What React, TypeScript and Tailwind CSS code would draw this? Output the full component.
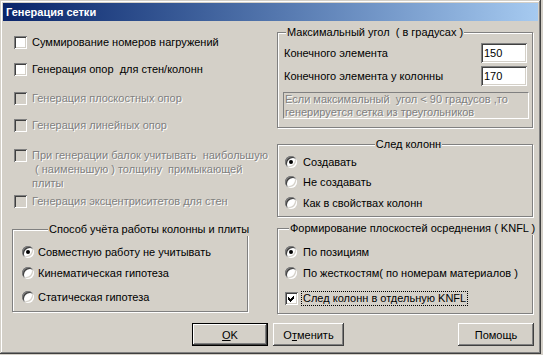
import React from 'react'

const sunken =
  'shadow-[inset_1px_1px_#808080,inset_-1px_-1px_#fff,inset_2px_2px_#404040,inset_-2px_-2px_#d4d0c8]'
const raised =
  'shadow-[inset_-1px_-1px_#404040,inset_1px_1px_#fff,inset_-2px_-2px_#808080,inset_2px_2px_#d4d0c8]'
const grayText = 'text-[#808080] [text-shadow:1px_1px_0_#fff]'

const CheckBox = ({ checked, disabled }: { checked?: boolean; disabled?: boolean }) => (
  <span
    className={`mt-[1px] flex h-[13px] w-[13px] shrink-0 items-center justify-center ${sunken} ${
      disabled ? 'bg-[#d4d0c8]' : 'bg-white'
    }`}
  >
    {checked && (
      <svg width="7" height="7" viewBox="0 0 7 7" shapeRendering="crispEdges">
        <path d="M0 2L2 4L6 0V3L2 7L0 5Z" fill="#000" />
      </svg>
    )}
  </span>
)

const Radio = ({ checked }: { checked?: boolean }) => (
  <span
    className={`mt-[1px] flex h-[12px] w-[12px] shrink-0 items-center justify-center rounded-full bg-white ${sunken}`}
  >
    {checked && <span className="h-[4px] w-[4px] rounded-full bg-black" />}
  </span>
)

const CheckRow = ({
  label,
  disabled,
  className = '',
}: {
  label: React.ReactNode
  disabled?: boolean
  className?: string
}) => (
  <div className={`flex items-start gap-[5px] pl-[2px] ${className}`}>
    <CheckBox disabled={disabled} />
    <span className={`whitespace-pre ${disabled ? grayText : ''}`}>{label}</span>
  </div>
)

const RadioRow = ({
  label,
  checked,
  className = '',
  gap = 'gap-[6px]',
}: {
  label: string
  checked?: boolean
  className?: string
  gap?: string
}) => (
  <div className={`flex items-start ${gap} ${className}`}>
    <Radio checked={checked} />
    <span className="whitespace-pre">{label}</span>
  </div>
)

const Group = ({
  title,
  center,
  titlePad = 'pl-[5px]',
  className = '',
  children,
}: {
  title: string
  center?: boolean
  titlePad?: string
  className?: string
  children: React.ReactNode
}) => (
  <div
    className={`flex flex-col border border-[#808080] shadow-[inset_1px_1px_#fff,1px_1px_#fff] ${className}`}
  >
    <div className={`-mt-[8px] flex ${center ? 'justify-center' : titlePad}`}>
      <span className="whitespace-pre bg-[#d4d0c8] px-[1px]">{title}</span>
    </div>
    {children}
  </div>
)

const Button = ({
  children,
  className = '',
  isDefault,
}: {
  children: React.ReactNode
  className?: string
  isDefault?: boolean
}) => (
  <div className={`h-[23px] ${isDefault ? 'border border-black' : ''} ${className}`}>
    <div className={`flex h-full w-full items-center justify-center bg-[#d4d0c8] ${raised}`}>
      {children}
    </div>
  </div>
)

export default function App() {
  return (
    <div className="h-[355px] w-[543px] bg-[#d4d0c8] font-['Liberation_Sans',Arial,sans-serif] text-[11px] leading-[14px] text-black">
      <div className="flex h-[354px] w-[541px] flex-col p-[3px] shadow-[inset_-1px_-1px_#404040,inset_1px_1px_#d4d0c8,inset_-2px_-2px_#808080,inset_2px_2px_#fff]">
        <div className="flex h-[18px] items-center bg-gradient-to-r from-[#0a246a] to-[#a6caf0] pl-[3px] text-[11px] font-bold text-white">
          Генерация сетки
        </div>

        <div className="flex pl-[9px]">
          <div className="flex w-[236px] flex-col pt-[14px]">
            <CheckRow label="Суммирование номеров нагружений" />
            <CheckRow className="mt-[13px]" label="Генерация опор  для стен/колонн" />
            <CheckRow className="mt-[15px]" disabled label="Генерация плоскостных опор" />
            <CheckRow className="mt-[13px]" disabled label="Генерация линейных опор" />
            <CheckRow
              className="mt-[16px]"
              disabled
              label={
                <>
                  При генерации балок учитывать  наибольшую
                  <br />
                  {' ( наименьшую ) толщину  примыкающей'}
                  <br />
                  плиты
                </>
              }
            />
            <CheckRow className="mt-[4px]" disabled label="Генерация эксцентриситетов для стен" />

            <Group
              title="Способ учёта работы колонны и плиты"
              titlePad="pl-[26px]"
              className="mt-[21px] h-[83px] pl-[9px]"
            >
              <RadioRow gap="gap-[4px]" className="mt-[9px]" checked label="Совместную работу не учитывать" />
              <RadioRow gap="gap-[4px]" className="mt-[7px]" label="Кинематическая гипотеза" />
              <RadioRow gap="gap-[4px]" className="mt-[10px]" label="Статическая гипотеза" />
            </Group>
          </div>

          <div className="ml-[29px] flex w-[256px] flex-col pt-[11px]">
            <Group title="Максимальный угол  ( в градусах )" titlePad="pl-[8px]" className="h-[96px]">
              <div className="mt-[4px] flex h-[20px] items-center justify-between pl-[6px] pr-[5px]">
                <span>Конечного элемента</span>
                <input
                  readOnly
                  value="150"
                  className={`h-[20px] w-[46px] bg-white pl-[3px] outline-none ${sunken}`}
                />
              </div>
              <div className="mt-[3px] flex h-[20px] items-center justify-between pl-[6px] pr-[5px]">
                <span>Конечного элемента у колонны</span>
                <input
                  readOnly
                  value="170"
                  className={`h-[20px] w-[46px] bg-white pl-[3px] outline-none ${sunken}`}
                />
              </div>
              <div
                className={`mt-[6px] ml-[5px] mr-[3px] h-[27px] whitespace-pre border border-t-[#808080] border-l-[#808080] border-b-white border-r-white px-[1px] leading-[13px] ${grayText}`}
              >
                {'Если максимальный  угол < 90 градусов ,то'}
                <br />
                генерируется сетка из треугольников
              </div>
            </Group>

            <Group title="След колонн" center className="mt-[16px] h-[73px] pl-[7px]">
              <RadioRow className="mt-[4px]" checked label="Создавать" />
              <RadioRow className="mt-[6px]" label="Не создавать" />
              <RadioRow className="mt-[7px]" label="Как в свойствах колонн" />
            </Group>

            <Group
              title="Формирование плоскостей осреднения ( KNFL )"
              titlePad="pl-[4px]"
              className="mt-[11px] h-[86px] pl-[7px]"
            >
              <RadioRow className="mt-[10px]" checked label="По позициям" />
              <RadioRow className="mt-[7px]" label="По жесткостям( по номерам материалов )" />
              <div className="mt-[11px] flex items-start gap-[3px]">
                <CheckBox checked />
                <span className="border border-dotted border-black px-[1px] leading-[13px]">
                  След колонн в отдельную KNFL
                </span>
              </div>
            </Group>
          </div>
        </div>

        <div className="mt-[9px] flex">
          <Button isDefault className="ml-[189px] w-[76px]">
            <span>
              <span className="underline">O</span>K
            </span>
          </Button>
          <Button className="ml-[5px] w-[71px]">
            <span>
              О<span className="underline">т</span>менить
            </span>
          </Button>
          <Button className="ml-[114px] w-[76px]">Помощь</Button>
        </div>
      </div>
    </div>
  )
}
